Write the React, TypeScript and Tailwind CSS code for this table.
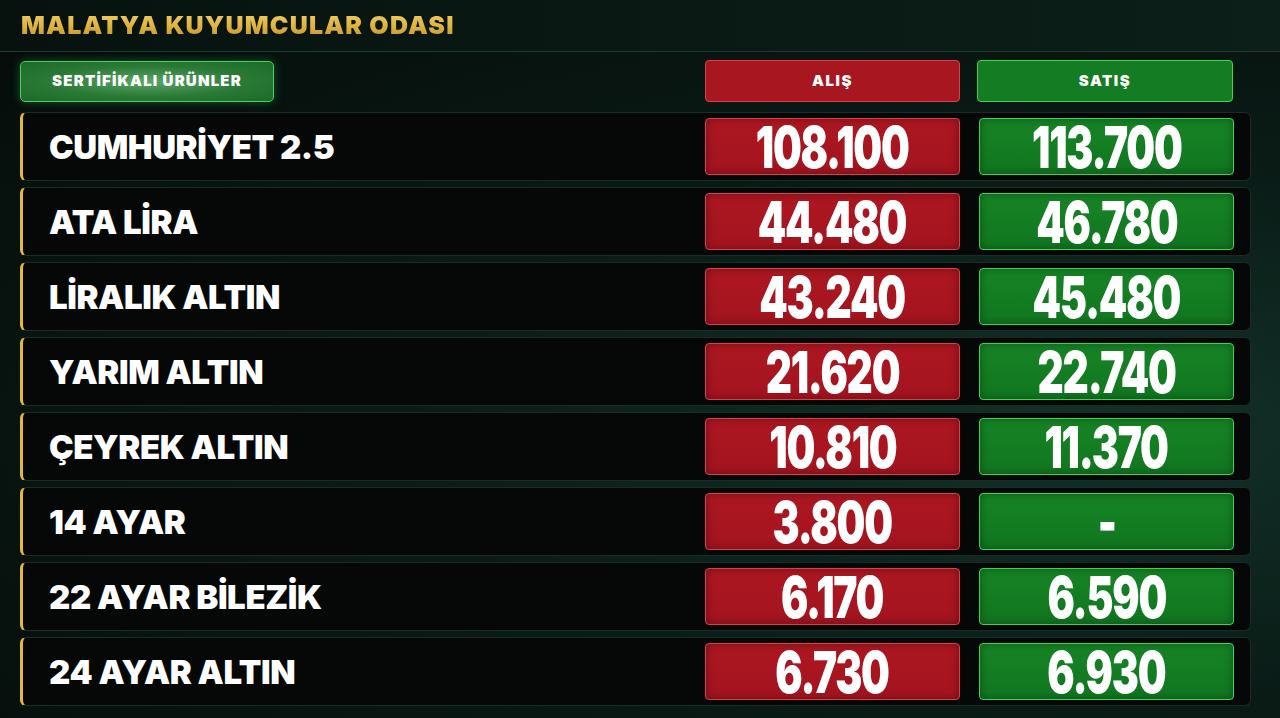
const rows: { name: string; buy: string; sell: string }[] = [
  { name: "CUMHURİYET 2.5", buy: "108.100", sell: "113.700" },
  { name: "ATA LİRA", buy: "44.480", sell: "46.780" },
  { name: "LİRALIK ALTIN", buy: "43.240", sell: "45.480" },
  { name: "YARIM ALTIN", buy: "21.620", sell: "22.740" },
  { name: "ÇEYREK ALTIN", buy: "10.810", sell: "11.370" },
  { name: "14 AYAR", buy: "3.800", sell: "-" },
  { name: "22 AYAR BİLEZİK", buy: "6.170", sell: "6.590" },
  { name: "24 AYAR ALTIN", buy: "6.730", sell: "6.930" },
];

const sans = "font-['Inter','Noto_Sans',sans-serif]";

function PriceBox({ value, kind }: { value: string; kind: "buy" | "sell" }) {
  const tone =
    kind === "buy"
      ? "border-[#d8414b] bg-[linear-gradient(180deg,#ad1721,#a3141f)] shadow-[inset_0_0_8px_rgba(0,0,0,0.35)]"
      : "border-[#3fd253] bg-[linear-gradient(180deg,#168425,#117620)] shadow-[inset_0_0_8px_rgba(0,0,0,0.35)]";
  return (
    <div className={`flex h-[57px] w-[255px] items-center justify-center rounded-[4px] border ${tone}`}>
      <span
        className={`${sans} inline-block scale-x-[0.7] text-[58px] leading-none font-black tracking-[-0.03em] whitespace-nowrap text-white`}
      >
        {value}
      </span>
    </div>
  );
}

export default function App() {
  return (
    <div className="h-[718px] w-[1280px] overflow-hidden bg-[radial-gradient(ellipse_at_85%_60%,#123229_0%,#0a1b16_45%,#050b09_100%)]">
      <div className="flex h-[52px] items-center border-b border-[#1f3a31] bg-[linear-gradient(90deg,#07120e,#0c1f19)] pl-[21px]">
        <h1
          className={`${sans} bg-[linear-gradient(180deg,#f6d776_0%,#e0b43e_50%,#b98a22_100%)] bg-clip-text text-[25px] font-black tracking-[0.048em] text-transparent`}
        >
          MALATYA KUYUMCULAR ODASI
        </h1>
      </div>

      <div className="ml-5 w-[1231px]">
        <div className="mt-2 flex h-[42px] items-center">
          <div
            className={`${sans} flex h-[41px] w-[254px] items-center justify-center rounded-[5px] border border-[#46d45a] bg-[radial-gradient(ellipse_at_center,#5aa566_0%,#2a7a36_55%,#1b6a28_100%)] text-[15px] font-black tracking-[0.08em] text-white shadow-[0_0_10px_rgba(70,212,90,0.35)]`}
          >
            SERTİFİKALI ÜRÜNLER
          </div>
          <div className="flex-1" />
          <div
            className={`${sans} flex h-[42px] w-[255px] items-center justify-center rounded-[4px] border border-[#d8414b] bg-[#a8161f] text-[15px] font-black tracking-[0.1em] text-white`}
          >
            ALIŞ
          </div>
          <div
            className={`${sans} mr-[18px] ml-[17px] flex h-[42px] w-[256px] items-center justify-center rounded-[4px] border border-[#3fd253] bg-[#147c22] text-[15px] font-black tracking-[0.1em] text-white`}
          >
            SATIŞ
          </div>
        </div>

        <div className="mt-[10px] flex flex-col gap-[6px]">
          {rows.map((r) => (
            <div
              key={r.name}
              className="flex h-[69px] items-center rounded-[6px] border border-[#1a2c25] border-l-[3px] border-l-[#e2b93b] bg-[#050807] py-[6px] pr-[16px] pl-[26px]"
            >
              <div className={`${sans} flex-1 pt-[3px] text-[33px] font-black tracking-[-0.012em] text-white`}>{r.name}</div>
              <div className="flex gap-[19px]">
                <PriceBox value={r.buy} kind="buy" />
                <PriceBox value={r.sell} kind="sell" />
              </div>
            </div>
          ))}
        </div>
      </div>
    </div>
  );
}
